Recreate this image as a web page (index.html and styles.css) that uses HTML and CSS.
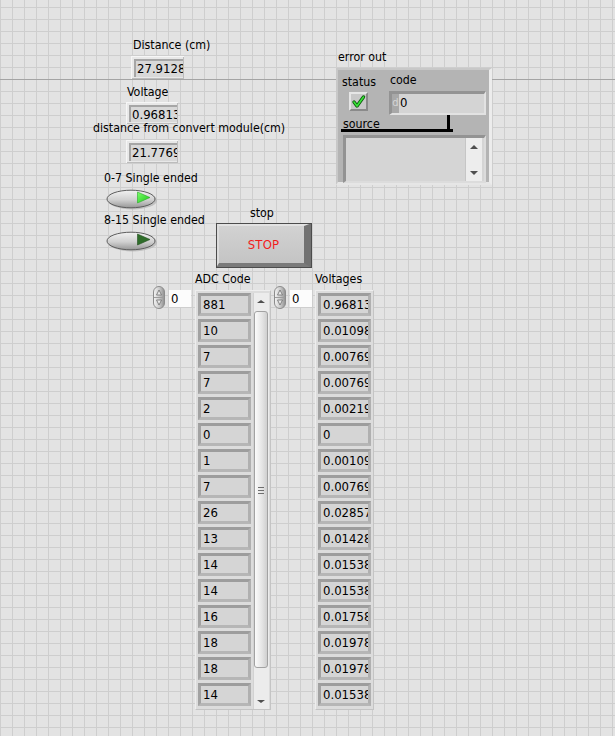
FILE: index.html
```html
<!DOCTYPE html>
<html>
<head>
<meta charset="utf-8">
<title>Front Panel</title>
<link rel="stylesheet" href="styles.css">
</head>
<body>
<div class="panel">
  <div class="hline"></div>

  <div class="lbl l-dist">Distance (cm)</div>
  <div class="ind i-dist"><div class="field">27.9128</div></div>

  <div class="lbl l-volt">Voltage</div>
  <div class="ind i-volt"><div class="field">0.96813</div></div>

  <div class="lbl l-conv">distance from convert module(cm)</div>
  <div class="ind i-conv"><div class="field">21.7769</div></div>

  <div class="lbl l-s07">0-7 Single ended</div>
  <svg class="sw sw1" width="54" height="24" viewBox="0 0 54 24">
    <defs>
      <linearGradient id="swg1" x1="0" y1="0" x2="0" y2="1">
        <stop offset="0" stop-color="#f2f2f2"/>
        <stop offset="0.55" stop-color="#d0d0d0"/>
        <stop offset="1" stop-color="#979797"/>
      </linearGradient>
      <linearGradient id="gr1" x1="0" y1="0" x2="1" y2="1">
        <stop offset="0" stop-color="#7dff6a"/>
        <stop offset="1" stop-color="#19c419"/>
      </linearGradient>
    </defs>
    <ellipse cx="27.5" cy="13.5" rx="24.5" ry="9" fill="#b4b4b4" opacity="0.75"/>
    <ellipse cx="26" cy="12" rx="24" ry="8.8" fill="url(#swg1)" stroke="#5e5e5e" stroke-width="1"/>
    <path d="M32.5 5 L45 10.5 L32.5 16 Z" fill="url(#gr1)" stroke="#2aa82a" stroke-width="0.6"/>
  </svg>

  <div class="lbl l-s815">8-15 Single ended</div>
  <svg class="sw sw2" width="54" height="24" viewBox="0 0 54 24">
    <defs>
      <linearGradient id="swg2" x1="0" y1="0" x2="0" y2="1">
        <stop offset="0" stop-color="#f2f2f2"/>
        <stop offset="0.55" stop-color="#d0d0d0"/>
        <stop offset="1" stop-color="#979797"/>
      </linearGradient>
    </defs>
    <ellipse cx="27.5" cy="13.5" rx="24.5" ry="9" fill="#b4b4b4" opacity="0.75"/>
    <ellipse cx="26" cy="12" rx="24" ry="8.8" fill="url(#swg2)" stroke="#5e5e5e" stroke-width="1"/>
    <path d="M32.5 5 L45 10.5 L32.5 16 Z" fill="#2f6d2a" stroke="#234f20" stroke-width="0.6"/>
  </svg>

  <div class="lbl l-stop">stop</div>
  <div class="stop"><span>STOP</span></div>

  <div class="lbl l-err">error out</div>
  <div class="err">
    <div class="e-lbl e-status">status</div>
    <div class="e-lbl e-code">code</div>
    <div class="chk">
      <svg width="15" height="15" viewBox="0 0 15 15">
        <path d="M3 8 L6 12 L12.5 3" fill="none" stroke="#0d5a0d" stroke-width="3.4" stroke-linecap="round" stroke-linejoin="round"/>
        <path d="M3 8 L6 12 L12.5 3" fill="none" stroke="#39e639" stroke-width="1.6" stroke-linecap="round" stroke-linejoin="round"/>
      </svg>
    </div>
    <div class="codefield"><span class="radix">d</span><span class="cval">0</span></div>
    <div class="e-lbl e-source">source</div>
    <div class="bar-h"></div>
    <div class="bar-v"></div>
    <div class="srcfield">
      <div class="srctext"></div>
      <div class="srcscroll">
        <span class="tri-up"></span>
        <span class="tri-down"></span>
      </div>
    </div>
  </div>

  <div class="lbl l-adc">ADC Code</div>
  <div class="idx idx1">
    <svg width="12" height="23" viewBox="0 0 12 23">
      <defs>
        <linearGradient id="sp1" x1="0" y1="0" x2="1" y2="0">
          <stop offset="0" stop-color="#f4f4f4"/>
          <stop offset="0.5" stop-color="#cdcdcd"/>
          <stop offset="1" stop-color="#8e8e8e"/>
        </linearGradient>
      </defs>
      <rect x="0.5" y="0.5" width="11" height="22" rx="5.5" fill="url(#sp1)" stroke="#8c8c8c"/>
      <line x1="1" y1="11.5" x2="11" y2="11.5" stroke="#9c9c9c"/>
      <path d="M6 4 L8.5 9 H3.5 Z" fill="#e8e8e8" stroke="#6e6e6e" stroke-width="0.8"/>
      <path d="M6 19 L8.5 14 H3.5 Z" fill="#e8e8e8" stroke="#6e6e6e" stroke-width="0.8"/>
    </svg>
    <div class="idxfield">0</div>
  </div>

  <div class="arr arr1">
    <div class="elems">
      <div class="el">881</div>
      <div class="el">10</div>
      <div class="el">7</div>
      <div class="el">7</div>
      <div class="el">2</div>
      <div class="el">0</div>
      <div class="el">1</div>
      <div class="el">7</div>
      <div class="el">26</div>
      <div class="el">13</div>
      <div class="el">14</div>
      <div class="el">14</div>
      <div class="el">16</div>
      <div class="el">18</div>
      <div class="el">18</div>
      <div class="el">14</div>
    </div>
    <div class="vscroll">
      <span class="tri-up"></span>
      <div class="thumb"><span class="grip"></span></div>
      <span class="tri-down"></span>
    </div>
  </div>

  <div class="lbl l-vs">Voltages</div>
  <div class="idx idx2">
    <svg width="12" height="23" viewBox="0 0 12 23">
      <defs>
        <linearGradient id="sp2" x1="0" y1="0" x2="1" y2="0">
          <stop offset="0" stop-color="#f4f4f4"/>
          <stop offset="0.5" stop-color="#cdcdcd"/>
          <stop offset="1" stop-color="#8e8e8e"/>
        </linearGradient>
      </defs>
      <rect x="0.5" y="0.5" width="11" height="22" rx="5.5" fill="url(#sp2)" stroke="#8c8c8c"/>
      <line x1="1" y1="11.5" x2="11" y2="11.5" stroke="#9c9c9c"/>
      <path d="M6 4 L8.5 9 H3.5 Z" fill="#e8e8e8" stroke="#6e6e6e" stroke-width="0.8"/>
      <path d="M6 19 L8.5 14 H3.5 Z" fill="#e8e8e8" stroke="#6e6e6e" stroke-width="0.8"/>
    </svg>
    <div class="idxfield">0</div>
  </div>

  <div class="arr arr2">
    <div class="elems">
      <div class="el">0.96813</div>
      <div class="el">0.01098</div>
      <div class="el">0.00769</div>
      <div class="el">0.00769</div>
      <div class="el">0.00219</div>
      <div class="el">0</div>
      <div class="el">0.00109</div>
      <div class="el">0.00769</div>
      <div class="el">0.02857</div>
      <div class="el">0.01428</div>
      <div class="el">0.01538</div>
      <div class="el">0.01538</div>
      <div class="el">0.01758</div>
      <div class="el">0.01978</div>
      <div class="el">0.01978</div>
      <div class="el">0.01538</div>
    </div>
  </div>
</div>
</body>
</html>
```

FILE: styles.css
```css
html, body {
  margin: 0;
  padding: 0;
}

body {
  width: 615px;
  height: 736px;
  overflow: hidden;
  background-color: #e3e3e3;
  background-image:
    linear-gradient(to right, #cecece 1px, transparent 1px),
    linear-gradient(to bottom, #cecece 1px, transparent 1px);
  background-size: 12px 12px;
  background-position: 0 7px;
}

.panel {
  position: relative;
  width: 615px;
  height: 736px;
  font-family: "DejaVu Sans Condensed", "DejaVu Sans", sans-serif;
  font-size: 12.3px;
  color: #000;
}

.hline {
  position: absolute;
  left: 0;
  top: 79px;
  width: 615px;
  height: 1px;
  background: #a4a4a4;
}

.lbl {
  position: absolute;
  white-space: nowrap;
  line-height: 14px;
}

.l-dist { left: 133px; top: 38px; }
.l-volt { left: 127px; top: 85px; }
.l-conv { left: 93px; top: 121px; }
.l-s07 { left: 104px; top: 171px; }
.l-s815 { left: 104px; top: 213px; }
.l-stop { left: 250px; top: 206px; }
.l-err { left: 338px; top: 50px; }
.l-adc { left: 195px; top: 272px; }
.l-vs { left: 315px; top: 272px; }

/* numeric indicators */
.ind {
  position: absolute;
  box-sizing: border-box;
  padding: 3px 1px 2px 3px;
  background: #e8e8e8;
  box-shadow: inset 1px 1px 0 #f6f6f6, inset -1px -1px 0 #bcbcbc;
}
.ind .field {
  box-sizing: border-box;
  height: 100%;
  background: #d8d8d8;
  border-top: 2px solid #a6a6a6;
  border-left: 2px solid #a6a6a6;
  padding-left: 1px;
  font-size: 13px;
  line-height: 16px;
  white-space: nowrap;
  overflow: hidden;
}
.i-dist { left: 131px; top: 56px; width: 53px; height: 23px; }
.i-volt { left: 126px; top: 102px; width: 52px; height: 22px; }
.i-conv { left: 126px; top: 140px; width: 52px; height: 23px; }

/* switches */
.sw { position: absolute; display: block; }
.sw1 { left: 105px; top: 187px; }
.sw2 { left: 105px; top: 229px; }

/* stop button */
.stop {
  position: absolute;
  left: 216px;
  top: 223px;
  width: 96px;
  height: 45px;
  box-sizing: border-box;
  outline: 1px solid #4c4c4c;
  outline-offset: -1px;
  border-style: solid;
  border-width: 3px 8px 5px 3px;
  border-color: #e2e2e2 #727272 #7a7a7a #dcdcdc;
  background: linear-gradient(#d2d2d2, #c4c4c4);
  display: flex;
  align-items: center;
  justify-content: center;
  padding-left: 4px;
}
.stop span {
  color: #f21b1b;
  font-size: 13px;
  letter-spacing: 0.2px;
}

/* error cluster */
.err {
  position: absolute;
  left: 336px;
  top: 68px;
  width: 156px;
  height: 117px;
  box-sizing: border-box;
  background: #b4b4b4;
  border-style: solid;
  border-width: 2px 3px 3px 2px;
  border-color: #c8c8c8 #ececec #e6e6e6 #c8c8c8;
}
.err > * { position: absolute; }
.e-lbl { line-height: 14px; white-space: nowrap; }
.e-status { left: 4px; top: 5px; }
.e-code { left: 52px; top: 3px; }
.e-source { left: 5px; top: 47px; }

.chk {
  left: 11px;
  top: 22px;
  width: 19px;
  height: 19px;
  box-sizing: border-box;
  background: #c8c8c8;
  border-style: solid;
  border-width: 2px;
  border-color: #e6e6e6 #8a8a8a #8a8a8a #e6e6e6;
  display: flex;
  align-items: center;
  justify-content: center;
}
.chk svg { display: block; }

.codefield {
  left: 51px;
  top: 21px;
  width: 97px;
  height: 24px;
  box-sizing: border-box;
  background: #d4d4d4;
  border-style: solid;
  border-width: 3px 2px 2px 3px;
  border-color: #939393 #e2e2e2 #e2e2e2 #939393;
  display: flex;
  align-items: stretch;
  line-height: 17px;
}
.radix {
  width: 7px;
  background: #a8a8a8;
  color: #d6d6d6;
  font-size: 11px;
  text-align: center;
}
.cval { padding-left: 1px; font-size: 13px; }

.bar-h {
  left: 3px;
  top: 59px;
  width: 112px;
  height: 3px;
  background: #000;
}
.bar-v {
  left: 109px;
  top: 45px;
  width: 3px;
  height: 17px;
  background: #000;
}

.srcfield {
  left: 5px;
  top: 65px;
  width: 143px;
  height: 48px;
  box-sizing: border-box;
  border-style: solid;
  border-width: 3px 2px 2px 3px;
  border-color: #939393 #dcdcdc #dcdcdc #939393;
  background: #d5d5d5;
  display: flex;
}
.srctext { flex: 1; }
.srcscroll {
  position: relative;
  width: 16px;
  margin: 0 2px 0 0;
  background: #ededed;
  border-left: 1px solid #c6c6c6;
}

/* arrows */
.tri-up, .tri-down {
  position: absolute;
  left: 50%;
  margin-left: -4px;
  width: 0;
  height: 0;
  border-left: 4px solid transparent;
  border-right: 4px solid transparent;
}
.tri-up { top: 7px; border-bottom: 4px solid #4f4f4f; }
.tri-down { bottom: 6px; border-top: 4px solid #4f4f4f; }

/* index controls */
.idx {
  position: absolute;
  display: flex;
  align-items: flex-start;
  gap: 4px;
}
.idx svg { display: block; }
.idx1 { left: 153px; top: 286px; }
.idx2 { left: 274px; top: 286px; }
.idxfield {
  margin-top: 4px;
  width: 22px;
  height: 17px;
  background: #fcfcfc;
  font-size: 13px;
  line-height: 17px;
  padding-left: 2px;
  box-sizing: border-box;
}

/* arrays */
.arr {
  position: absolute;
  top: 290px;
  height: 420px;
  box-sizing: border-box;
  background: #dcdcdc;
  border-style: solid;
  border-width: 1px;
  border-color: #eeeeee #c4c4c4 #c4c4c4 #eeeeee;
  display: flex;
  align-items: flex-start;
  padding: 2px 1px 0 2px;
  gap: 2px;
}
.arr1 { left: 195px; width: 76px; }
.arr2 { left: 315px; width: 59px; }

.elems {
  display: flex;
  flex-direction: column;
  gap: 3px;
}
.el {
  width: 53px;
  height: 23px;
  box-sizing: border-box;
  border-style: solid;
  border-width: 3px;
  border-color: #9d9d9d #b0b0b0 #b6b6b6 #a2a2a2;
  background: #d5d5d5;
  font-size: 13px;
  line-height: 17px;
  padding-left: 2px;
  white-space: nowrap;
  overflow: hidden;
}

.vscroll {
  position: relative;
  width: 16px;
  height: 416px;
  background: #ececec;
  box-shadow: inset 1px 0 0 #d2d2d2;
}
.thumb {
  position: absolute;
  left: 1px;
  top: 18px;
  width: 14px;
  height: 357px;
  box-sizing: border-box;
  border: 1px solid #a2a2a2;
  border-radius: 3px;
  background: linear-gradient(to right, #fbfbfb, #e4e4e4 60%, #cfcfcf);
}
.grip {
  position: absolute;
  left: 3px;
  top: 175px;
  width: 6px;
  height: 5px;
  border-top: 1px solid #6e6e6e;
  border-bottom: 1px solid #6e6e6e;
}
.grip::after {
  content: "";
  position: absolute;
  left: 0;
  top: 2px;
  width: 6px;
  height: 1px;
  background: #6e6e6e;
}
.vscroll .tri-up { top: 7px; border-bottom-width: 3px; }
.vscroll .tri-down { bottom: 6px; border-top-width: 3px; }
```
